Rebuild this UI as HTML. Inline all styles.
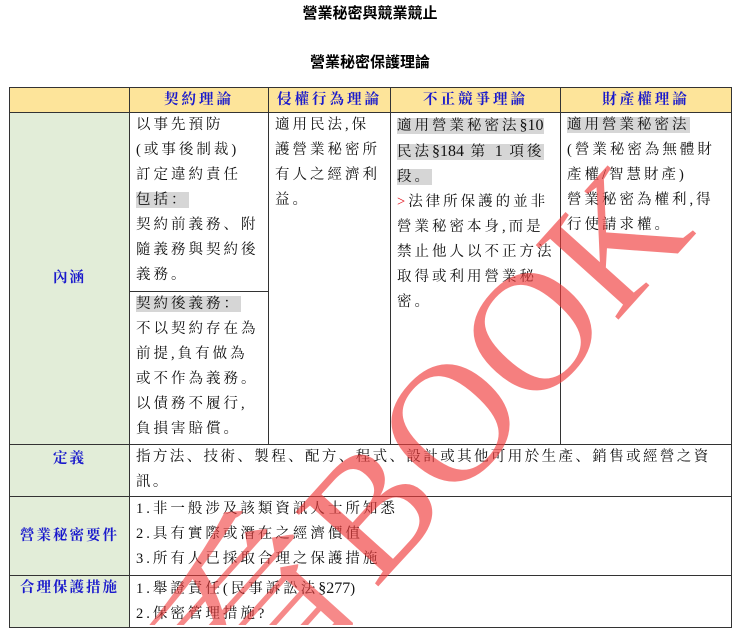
<!DOCTYPE html>
<html><head><meta charset="utf-8"><style>
body{margin:0;width:740px;height:625px;overflow:hidden;background:#fff;font-family:"Liberation Serif","Noto Serif CJK SC","Noto Serif CJK TC",serif;position:relative}
.t1,.t2{position:absolute;left:0;width:740px;text-align:center;font-weight:bold;font-size:15px;font-family:"Liberation Sans","Noto Sans CJK TC",sans-serif}
.t1{top:2px}.t2{top:51px}
table{position:absolute;left:9px;top:87px;border-collapse:collapse;table-layout:fixed;width:722px}
td{border:1.5px solid #333;vertical-align:top;padding:0 3px 0 6px;font-size:14.5px;line-height:25px;letter-spacing:3px;color:#111}
.h td{background:#fde49a;height:24px;text-align:center;color:#1a1acc;font-weight:bold;letter-spacing:3px;line-height:24px;padding:0}
.l{background:#e2edd8;color:#1a1acc;text-align:center;vertical-align:middle;font-weight:bold;padding:0;letter-spacing:2px}
.g{background:#d6d6d6}
.r{color:#e0101a}
.n{letter-spacing:0;font-size:16px}
</style></head><body>
<div class="t1">營業秘密與競業競止</div>
<div class="t2">營業秘密保護理論</div>
<table>
<colgroup><col style="width:120px"><col style="width:139px"><col style="width:122px"><col style="width:170px"><col style="width:171px"></colgroup>
<tr class="h"><td></td><td>契約理論</td><td>侵權行為理論</td><td>不正競爭理論</td><td>財產權理論</td></tr>
<tr><td class="l" rowspan="2">內涵</td><td style="height:178px">以事先預防<br>(或事後制裁)<br>訂定違約責任<br><span class="g">包括：</span><br>契約前義務、附<br>隨義務與契約後<br>義務。</td>
<td rowspan="2">適用民法,保<br>護營業秘密所<br>有人之經濟利<br>益。</td>
<td rowspan="2"><span class="g">適用營業秘密法<span class="n">§10</span></span><br><span class="g">民法<span class="n">§184</span> 第 <span class="n">1</span> 項後</span><br><span class="g">段。</span><br><span class="r">&gt;</span>法律所保護的並非<br>營業秘密本身,而是<br>禁止他人以不正方法<br>取得或利用營業秘<br>密。</td>
<td rowspan="2"><span class="g">適用營業秘密法</span><br>(營業秘密為無體財<br>產權/智慧財產)<br>營業秘密為權利,得<br>行使請求權。</td></tr>
<tr><td style="height:152px"><span class="g">契約後義務：</span><br>不以契約存在為<br>前提,負有做為<br>或不作為義務。<br>以債務不履行,<br>負損害賠償。</td></tr>
<tr><td class="l" style="vertical-align:top;padding-top:2px">定義</td><td colspan="4" style="height:51px;letter-spacing:2.4px;white-space:nowrap">指方法、技術、製程、配方、程式、設計或其他可用於生產、銷售或經營之資<br>訊。</td></tr>
<tr><td class="l">營業秘密要件</td><td colspan="4" style="height:78px">1.非一般涉及該類資訊人士所知悉<br>2.具有實際或潛在之經濟價值<br>3.所有人已採取合理之保護措施</td></tr>
<tr><td class="l" style="vertical-align:top;padding-top:0">合理保護措施</td><td colspan="4" style="height:50px">1.舉證責任(民事訴訟法<span class="n">§277</span>)<br>2.保密管理措施?</td></tr>
</table>
<svg style="position:absolute;left:0;top:0" width="740" height="625">
<g transform="translate(375,590) rotate(-48)">
<text x="0" y="0" font-family="Liberation Serif,serif" font-size="170" fill="#f03a3a" fill-opacity="0.65">BOOK</text>
<text x="-5" y="-5" text-anchor="end" font-family="Noto Serif CJK SC,serif" font-size="190" fill="#f03a3a" fill-opacity="0.6">試看</text>
</g>
</svg>
</body></html>
